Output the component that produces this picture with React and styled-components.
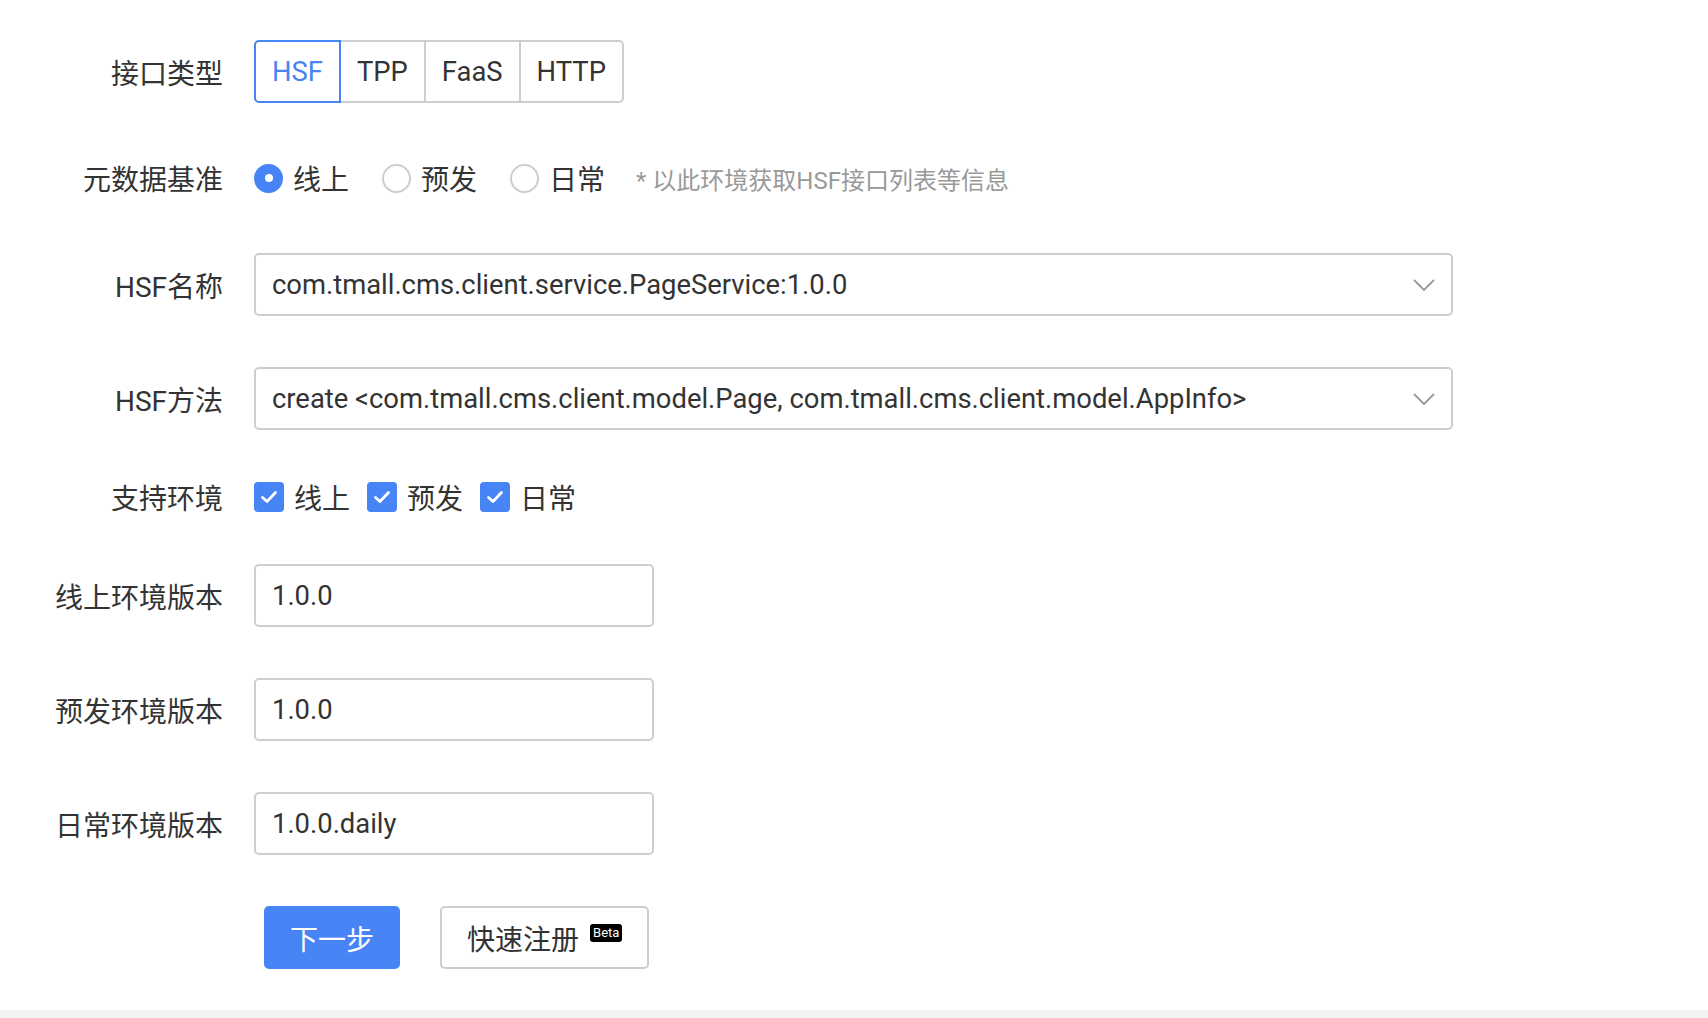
import React from "react";
import styled, { createGlobalStyle } from "styled-components";

const Global = createGlobalStyle`
  html, body { margin: 0; padding: 0; background: #f2f3f5; }
  body { font-family: Roboto, "Noto Sans CJK SC", sans-serif; color: #333; }
  * { box-sizing: border-box; }
`;

const Panel = styled.div`
  background: #fff;
  padding: 40px 0 41px;
`;

const Item = styled.div`
  display: flex;
  align-items: center;
  height: ${(p) => p.$h}px;
  margin-bottom: ${(p) => (p.$last ? 0 : 51)}px;
`;

const Label = styled.div`
  width: 223px;
  margin-right: 31px;
  text-align: right;
  font-size: 28px;
  color: #333;
  white-space: nowrap;
  flex-shrink: 0;
`;

const Segmented = styled.div`
  display: flex;
  height: 63px;
`;

const Segment = styled.div`
  display: flex;
  align-items: center;
  justify-content: center;
  height: 100%;
  padding: 0 16px;
  font-size: 27.4px;
  border: 2px solid ${(p) => (p.$active ? "#4784f5" : "#ccced4")};
  color: ${(p) => (p.$active ? "#4784f5" : "#333")};
  margin-left: ${(p) => (p.$first ? 0 : -2)}px;
  position: relative;
  z-index: ${(p) => (p.$active ? 1 : 0)};
  background: #fff;
  &:first-child { border-radius: 5px 0 0 5px; }
  &:last-child { border-radius: 0 5px 5px 0; }
`;

const Choices = styled.div`
  display: flex;
  align-items: center;
`;

const RadioOpt = styled.label`
  display: flex;
  align-items: center;
  margin-right: 33px;
  font-size: 28px;
  color: #333;
`;

const RadioDot = styled.span`
  width: 29px;
  height: 29px;
  border-radius: 50%;
  margin-right: 10px;
  display: flex;
  align-items: center;
  justify-content: center;
  background: ${(p) => (p.$checked ? "#4784f5" : "#fff")};
  border: 2px solid ${(p) => (p.$checked ? "#4784f5" : "#ccced4")};
  &::after {
    content: "";
    width: 8px;
    height: 8px;
    border-radius: 50%;
    background: #fff;
    display: ${(p) => (p.$checked ? "block" : "none")};
  }
`;

const Hint = styled.span`
  font-size: 24px;
  color: #999;
  margin-left: -2px;
`;

const Field = styled.div`
  display: flex;
  align-items: center;
  justify-content: space-between;
  width: ${(p) => p.$w}px;
  height: 63px;
  border: 2px solid #ccced4;
  border-radius: 5px;
  padding: 0 16px 0 16px;
  font-size: 27.4px;
  color: #333;
  white-space: nowrap;
`;

const CheckOpt = styled.label`
  display: flex;
  align-items: center;
  margin-right: 17px;
  font-size: 28px;
  color: #333;
`;

const CheckBox = styled.span`
  width: 30px;
  height: 30px;
  border-radius: 4px;
  background: #4784f5;
  margin-right: 10px;
  display: flex;
  align-items: center;
  justify-content: center;
`;

const Buttons = styled.div`
  display: flex;
  align-items: center;
  margin-left: 264px;
  gap: 40px;
`;

const Button = styled.button`
  height: 63px;
  padding: 0 ${(p) => (p.$primary ? 24 : 25)}px;
  font-family: Roboto, "Noto Sans CJK SC", sans-serif;
  font-size: 28px;
  border-radius: 5px;
  border: 2px solid ${(p) => (p.$primary ? "#4784f5" : "#ccced4")};
  background: ${(p) => (p.$primary ? "#4784f5" : "#fff")};
  color: ${(p) => (p.$primary ? "#fff" : "#333")};
  display: flex;
  align-items: center;
  cursor: pointer;
`;

const Beta = styled.span`
  background: #000;
  color: #fff;
  font-size: 13px;
  font-weight: 400;
  line-height: 18px;
  height: 18px;
  padding: 0 3px;
  border-radius: 3px;
  margin-left: 11px;
  margin-top: -10px;
  font-family: Roboto, sans-serif;
`;

const Chevron = () => (
  <svg width="22" height="12" viewBox="0 0 22 12" fill="none">
    <path d="M1 1 L11 11 L21 1" stroke="#999" strokeWidth="1.8" />
  </svg>
);

const Tick = () => (
  <svg width="18" height="14" viewBox="0 0 18 14" fill="none">
    <path d="M2.5 7.5 L7 11.5 L15.5 2.5" stroke="#fff" strokeWidth="2.8" strokeLinecap="round" strokeLinejoin="round" />
  </svg>
);

export default function App() {
  return (
    <>
      <Global />
      <Panel>
        <Item $h={63}>
          <Label>接口类型</Label>
          <Segmented>
            <Segment $active $first>HSF</Segment>
            <Segment>TPP</Segment>
            <Segment>FaaS</Segment>
            <Segment>HTTP</Segment>
          </Segmented>
        </Item>
        <Item $h={48}>
          <Label>元数据基准</Label>
          <Choices>
            <RadioOpt><RadioDot $checked />线上</RadioOpt>
            <RadioOpt><RadioDot />预发</RadioOpt>
            <RadioOpt><RadioDot />日常</RadioOpt>
            <Hint>* 以此环境获取HSF接口列表等信息</Hint>
          </Choices>
        </Item>
        <Item $h={63}>
          <Label>HSF名称</Label>
          <Field $w={1199}>
            <span>com.tmall.cms.client.service.PageService:1.0.0</span>
            <Chevron />
          </Field>
        </Item>
        <Item $h={63}>
          <Label>HSF方法</Label>
          <Field $w={1199}>
            <span>create &lt;com.tmall.cms.client.model.Page, com.tmall.cms.client.model.AppInfo&gt;</span>
            <Chevron />
          </Field>
        </Item>
        <Item $h={32}>
          <Label>支持环境</Label>
          <Choices>
            <CheckOpt><CheckBox><Tick /></CheckBox>线上</CheckOpt>
            <CheckOpt><CheckBox><Tick /></CheckBox>预发</CheckOpt>
            <CheckOpt><CheckBox><Tick /></CheckBox>日常</CheckOpt>
          </Choices>
        </Item>
        <Item $h={63}>
          <Label>线上环境版本</Label>
          <Field $w={400}>1.0.0</Field>
        </Item>
        <Item $h={63}>
          <Label>预发环境版本</Label>
          <Field $w={400}>1.0.0</Field>
        </Item>
        <Item $h={63}>
          <Label>日常环境版本</Label>
          <Field $w={400}>1.0.0.daily</Field>
        </Item>
        <Item $h={63} $last>
          <Buttons>
            <Button $primary>下一步</Button>
            <Button>快速注册<Beta>Beta</Beta></Button>
          </Buttons>
        </Item>
      </Panel>
    </>
  );
}
